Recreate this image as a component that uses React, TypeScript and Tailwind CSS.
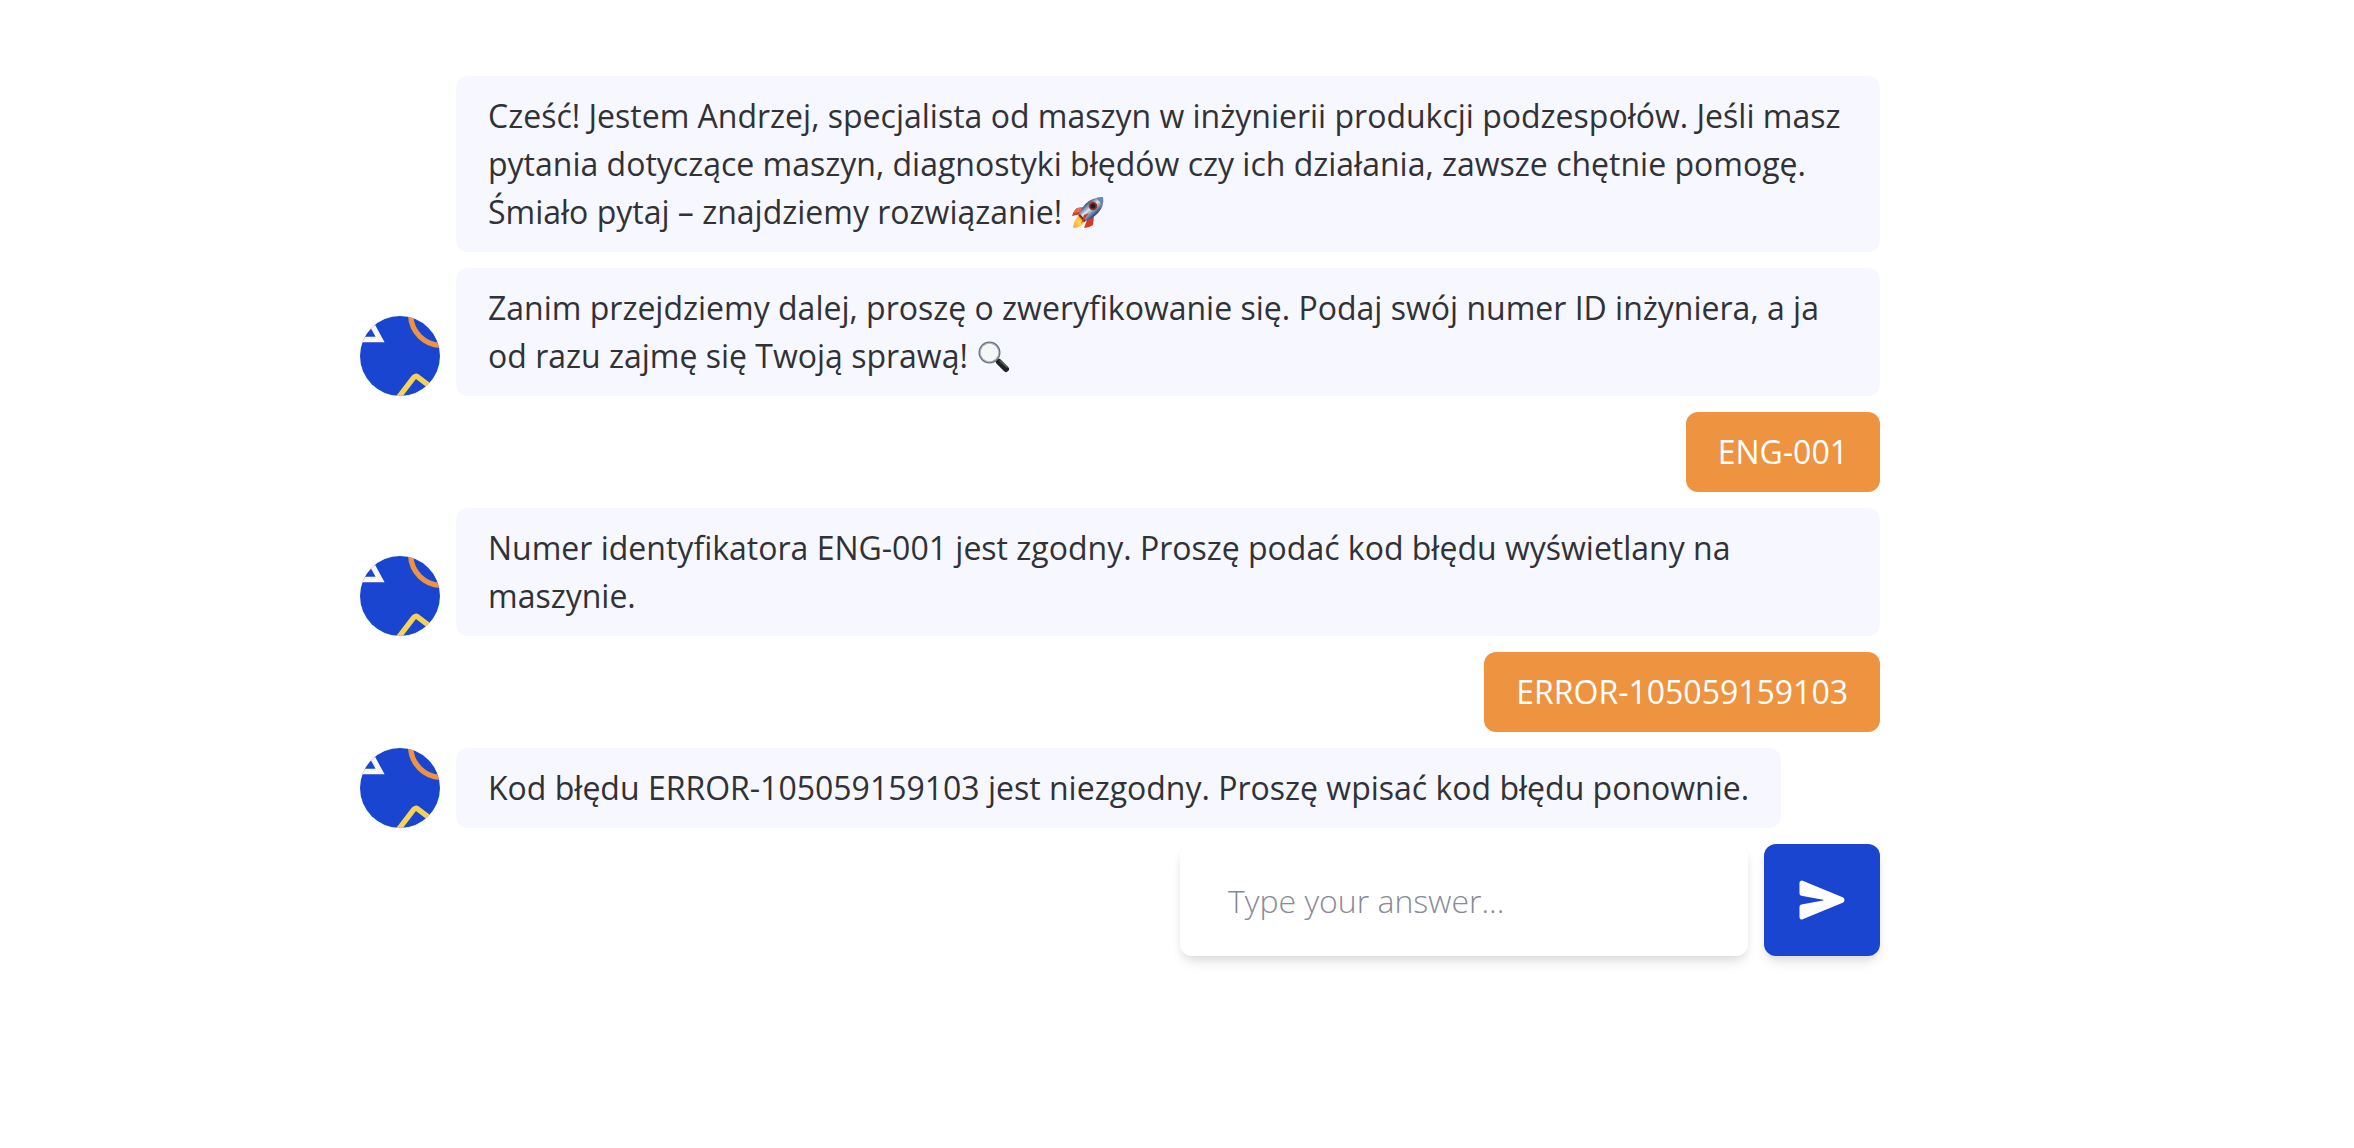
import type { ReactNode } from "react";

function Avatar() {
  return (
    <svg viewBox="0 0 75 75" fill="none" className="size-20 shrink-0 rounded-full" role="img" aria-label="Andrzej">
      <rect width="75" height="75" fill="#1a45d1" />
      <rect
        x="2.504"
        y="120.333"
        width="81.56"
        height="86.458"
        rx="2.5"
        transform="rotate(-52.6423 2.504 120.333)"
        stroke="#f6d358"
        strokeWidth="5"
      />
      <circle cx="76.5" cy="-1.5" r="29" stroke="#ee9340" strokeWidth="5" />
      <path d="M-49.822 22L-15.5 -40.788L18.822 22H-49.822Z" stroke="#f7f8ff" strokeWidth="5" />
    </svg>
  );
}

function Rocket() {
  return (
    <svg viewBox="0 0 32 32" className="ml-0.5 inline-block size-8 align-[-5px]" role="img" aria-label="Rakieta">
      <defs>
        <linearGradient id="hull" x1="14" y1="8" x2="23" y2="18" gradientUnits="userSpaceOnUse">
          <stop offset="0" stopColor="#48688c" />
          <stop offset="0.4" stopColor="#dbe6ee" />
          <stop offset="0.65" stopColor="#8ea6be" />
          <stop offset="1" stopColor="#274a7c" />
        </linearGradient>
        <linearGradient id="flame" x1="12" y1="20" x2="3" y2="30" gradientUnits="userSpaceOnUse">
          <stop offset="0" stopColor="#f07b25" />
          <stop offset="0.5" stopColor="#fbd851" />
          <stop offset="1" stopColor="#f4ad43" />
        </linearGradient>
      </defs>
      <path d="M13 10L5 11Q2 13 0 19L9 17ZM22 19L21 28Q17 31 12 31L15 23Z" fill="#d63a26" />
      <path d="M12 10L5 11Q3 13 1 16L9 15Z" fill="#ed6c51" />
      <path d="M8 18Q2 21 1 31Q10 31 14 23Z" fill="url(#flame)" />
      <path d="M7 17Q12 5 21 2Q27 0 31 0Q32 6 29 12Q24 20 14 24Z" fill="url(#hull)" />
      <path d="M24 1Q28 0 31 0Q32 5 30 9Q28 4 24 1Z" fill="#6786af" />
      <path d="M8 17L14 24L12 25L6 18Z" fill="#742e2b" />
      <circle cx="21" cy="9" r="4.3" fill="#a52d29" />
      <circle cx="21" cy="9" r="2.6" fill="#251d26" />
      <path d="M17 16L9 27L12 18Z" fill="#d63a26" />
    </svg>
  );
}

function Magnifier() {
  return (
    <svg viewBox="0 0 32 32" className="ml-0.5 inline-block size-8 align-[-5px]" role="img" aria-label="Lupa">
      <path d="M18 19L22 23" stroke="#8c9298" strokeWidth="3" />
      <path d="M21 21L28 28" stroke="#202126" strokeWidth="6" strokeLinecap="round" />
      <path d="M22 20L29 26" stroke="#60646a" strokeWidth="1.3" strokeLinecap="round" />
      <circle cx="11.5" cy="11.5" r="10" fill="#f4f6f8" stroke="#6d747b" strokeWidth="2" />
      <circle cx="11.5" cy="11.5" r="9.3" fill="none" stroke="#c4cad0" strokeWidth="0.8" />
    </svg>
  );
}

function BotGroup({ children }: { children: ReactNode }) {
  return (
    <div className="flex items-end gap-4">
      <Avatar />
      <div className="flex min-w-0 flex-1 flex-col items-start gap-4">{children}</div>
    </div>
  );
}

function BotMessage({ children }: { children: ReactNode }) {
  return <p className="rounded-xl bg-[#f7f7ff] px-8 py-4 text-[#303235]">{children}</p>;
}

function UserMessage({ children }: { children: ReactNode }) {
  return <p className="self-end rounded-xl bg-[#ee9340] px-8 py-4 text-white">{children}</p>;
}

export default function App() {
  return (
    <div className="min-h-screen bg-white pt-19 pr-[114px] font-['Open_Sans',sans-serif] text-[32px] leading-12">
      <main className="mx-auto flex max-w-[1520px] flex-col gap-4">
        <BotGroup>
          <BotMessage>
            Cześć! Jestem Andrzej, specjalista od maszyn w inżynierii produkcji podzespołów. Jeśli masz pytania
            dotyczące maszyn, diagnostyki błędów czy ich działania, zawsze chętnie pomogę. Śmiało pytaj – znajdziemy
            rozwiązanie! <Rocket />
          </BotMessage>
          <BotMessage>
            Zanim przejdziemy dalej, proszę o zweryfikowanie się. Podaj swój numer ID inżyniera, a ja od razu zajmę się
            Twoją sprawą! <Magnifier />
          </BotMessage>
        </BotGroup>
        <UserMessage>ENG-001</UserMessage>
        <BotGroup>
          <BotMessage>
            Numer identyfikatora ENG-001 jest zgodny. Proszę podać kod błędu wyświetlany na maszynie.
          </BotMessage>
        </BotGroup>
        <UserMessage>ERROR-105059159103</UserMessage>
        <BotGroup>
          <BotMessage>Kod błędu ERROR-105059159103 jest niezgodny. Proszę wpisać kod błędu ponownie.</BotMessage>
        </BotGroup>
        <form className="flex justify-end gap-4" onSubmit={(event) => event.preventDefault()}>
          <input
            type="text"
            aria-label="Type your answer"
            placeholder="Type your answer..."
            className="h-28 w-[568px] min-w-0 rounded-xl bg-white px-12 font-light text-[#303235] shadow-[0_8px_12px_-2px_rgba(0,0,0,0.1),0_4px_8px_-2px_rgba(0,0,0,0.06)] outline-none placeholder:text-[#868b96]"
          />
          <button
            type="submit"
            aria-label="Send"
            className="flex h-28 w-29 shrink-0 items-center justify-center rounded-xl bg-[#1a45d1] text-white shadow-[0_8px_12px_-2px_rgba(0,0,0,0.1),0_4px_8px_-2px_rgba(0,0,0,0.06)]"
          >
            <svg viewBox="0 0 512 512" fill="currentColor" className="size-12" aria-hidden="true">
              <path d="M476.59 227.05l-.16-.07L49.35 49.84A23.56 23.56 0 0027.14 52 24.65 24.65 0 0016 72.59v113.29a24 24 0 0019.52 23.57l232.93 43.07a4 4 0 010 7.86L35.53 303.45A24 24 0 0016 327v113.31A23.57 23.57 0 0026.59 460a23.94 23.94 0 0013.22 4 24.55 24.55 0 009.52-1.93L476.4 285.94l.19-.09a32 32 0 000-58.8z" />
            </svg>
          </button>
        </form>
      </main>
    </div>
  );
}
